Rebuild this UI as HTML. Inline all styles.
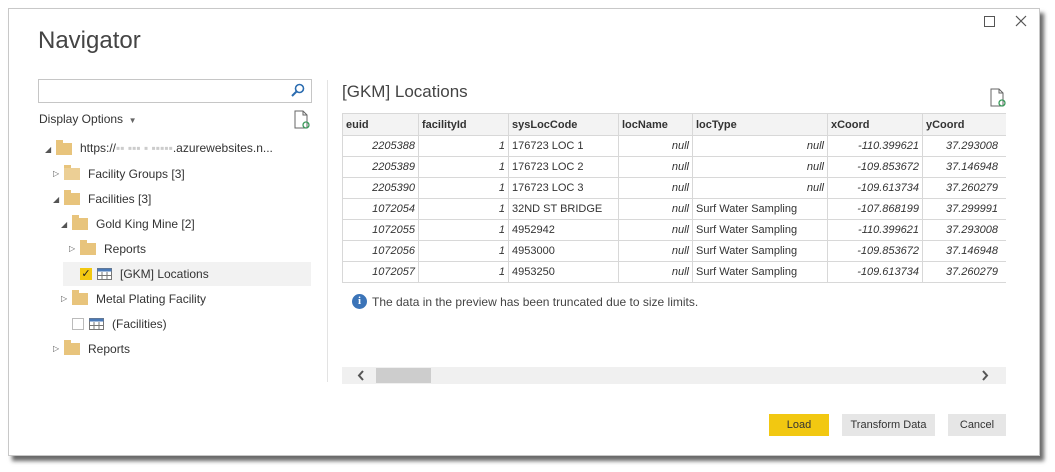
<!DOCTYPE html>
<html><head><style>
body{margin:0;width:1055px;height:472px;background:#fff;font-family:"Segoe UI","Liberation Sans",sans-serif;position:relative;overflow:hidden;color:#333}
.a{position:absolute}
.dlg{left:8px;top:8px;width:1030px;height:446px;border:1px solid #c8c8c8;background:#fff;box-shadow:4px 5px 4px #6a6a6a}
.t{font-size:12px;white-space:nowrap}
.fold{position:absolute;width:16px;height:12px;background:#e8c47c}
.fold:before{content:"";position:absolute;left:0;top:-3px;width:7px;height:3px;background:#e8c47c}
.tri{position:absolute;font-size:8px;color:#555}
table{border-collapse:collapse;font-size:11px;table-layout:fixed}
td{border:1px solid #d8d8d8;height:20px;padding:0 3px;white-space:nowrap;overflow:hidden}
th{border:1px solid #d8d8d8;background:#f3f3f3;height:21px;text-align:left;padding:0 3px;font-weight:bold;color:#333}
.n{text-align:right;font-style:italic}
.btn{position:absolute;top:414px;height:22px;font-size:11px;text-align:center;line-height:22px;background:#e6e6e6;color:#333}
</style></head><body>
<div class="a dlg"></div>
<div class="a" style="left:38px;top:27px;font-size:24px;color:#444;font-weight:300">Navigator</div>
<div class="a" style="left:984px;top:16px;width:9px;height:9px;border:1px solid #555"></div>
<svg class="a" style="left:1015px;top:15px" width="12" height="12"><path d="M1 1L11 11M11 1L1 11" stroke="#555" stroke-width="1.2"/></svg>
<div class="a" style="left:38px;top:79px;width:272px;height:22px;border:1px solid #c6c6c6"></div>
<svg class="a" style="left:290px;top:82px" width="16" height="16"><circle cx="9.5" cy="6.5" r="4" fill="none" stroke="#2b6cb0" stroke-width="1.6"/><line x1="6.5" y1="9.5" x2="2" y2="14" stroke="#2b6cb0" stroke-width="2"/></svg>
<div class="a t" style="left:39px;top:112px">Display Options <span style="font-size:8px;color:#666">&nbsp;▼</span></div>
<svg class="a" style="left:294px;top:110px" width="16" height="20"><path d="M1 1h8l4 4v13H1z" fill="#fff" stroke="#666"/><path d="M9 1v4h4" fill="none" stroke="#666"/><circle cx="12" cy="15" r="3" fill="none" stroke="#3a9a5a" stroke-width="1.3"/></svg>
<div class="a" style="left:327px;top:80px;width:1px;height:302px;background:#e3e3e3"></div>
<!-- tree -->
<div class="tri" style="left:45px;top:145px">◢</div><div class="fold" style="left:56px;top:143px"></div><div class="a t" style="left:80px;top:141px">https://<span style="color:#ccc">▪▪ ▪▪▪ ▪ ▪▪▪▪▪</span>.azurewebsites.n...</div>
<div class="tri" style="left:53px;top:169px">▷</div><div class="fold" style="left:64px;top:168px;background:#eccf95"></div><div class="a t" style="left:88px;top:167px">Facility Groups [3]</div>
<div class="tri" style="left:53px;top:195px">◢</div><div class="fold" style="left:64px;top:193px"></div><div class="a t" style="left:88px;top:192px">Facilities [3]</div>
<div class="tri" style="left:61px;top:220px">◢</div><div class="fold" style="left:72px;top:218px"></div><div class="a t" style="left:96px;top:217px">Gold King Mine [2]</div>
<div class="tri" style="left:69px;top:244px">▷</div><div class="fold" style="left:80px;top:243px"></div><div class="a t" style="left:104px;top:242px">Reports</div>
<div class="a" style="left:63px;top:262px;width:248px;height:24px;background:#f2f2f2"></div>
<div class="a" style="left:80px;top:268px;width:12px;height:12px;background:#f2c811;font-size:11px;line-height:12px;text-align:center;color:#222">✓</div>
<svg class="a" style="left:97px;top:268px" width="15" height="12"><rect x=".5" y=".5" width="14" height="11" fill="#fff" stroke="#777"/><rect x=".5" y=".5" width="14" height="3" fill="#4a7ab8"/><path d="M5 4v8M10 4v8M0 7.5h15" stroke="#777"/></svg>
<div class="a t" style="left:120px;top:267px">[GKM] Locations</div>
<div class="tri" style="left:61px;top:294px">▷</div><div class="fold" style="left:72px;top:293px"></div><div class="a t" style="left:96px;top:292px">Metal Plating Facility</div>
<div class="a" style="left:72px;top:318px;width:10px;height:10px;border:1px solid #bbb"></div>
<svg class="a" style="left:89px;top:318px" width="15" height="12"><rect x=".5" y=".5" width="14" height="11" fill="#fff" stroke="#777"/><rect x=".5" y=".5" width="14" height="3" fill="#4a7ab8"/><path d="M5 4v8M10 4v8M0 7.5h15" stroke="#777"/></svg>
<div class="a t" style="left:112px;top:317px">(Facilities)</div>
<div class="tri" style="left:53px;top:344px">▷</div><div class="fold" style="left:64px;top:343px"></div><div class="a t" style="left:88px;top:342px">Reports</div>
<!-- right -->
<div class="a" style="left:342px;top:82px;font-size:17px;color:#444;font-weight:300">[GKM] Locations</div>
<svg class="a" style="left:990px;top:88px" width="16" height="20"><path d="M1 1h8l4 4v13H1z" fill="#fff" stroke="#666"/><path d="M9 1v4h4" fill="none" stroke="#666"/><circle cx="12" cy="15" r="3" fill="none" stroke="#3a9a5a" stroke-width="1.3"/></svg>
<div class="a" style="left:342px;top:113px;width:664px;overflow:hidden">
<table style="width:700px">
<colgroup><col style="width:76px"><col style="width:90px"><col style="width:110px"><col style="width:74px"><col style="width:135px"><col style="width:95px"><col style="width:120px"></colgroup>
<tr><th>euid</th><th>facilityId</th><th>sysLocCode</th><th>locName</th><th>locType</th><th>xCoord</th><th>yCoord</th></tr>
<tr><td class="n">2205388</td><td class="n">1</td><td>176723 LOC 1</td><td class="n">null</td><td class="n">null</td><td class="n">-110.399621</td><td class="n" style="text-align:left;padding-left:23px">37.293008</td></tr>
<tr><td class="n">2205389</td><td class="n">1</td><td>176723 LOC 2</td><td class="n">null</td><td class="n">null</td><td class="n">-109.853672</td><td class="n" style="text-align:left;padding-left:23px">37.146948</td></tr>
<tr><td class="n">2205390</td><td class="n">1</td><td>176723 LOC 3</td><td class="n">null</td><td class="n">null</td><td class="n">-109.613734</td><td class="n" style="text-align:left;padding-left:23px">37.260279</td></tr>
<tr><td class="n">1072054</td><td class="n">1</td><td>32ND ST BRIDGE</td><td class="n">null</td><td>Surf Water Sampling</td><td class="n">-107.868199</td><td class="n" style="text-align:left;padding-left:23px">37.299991</td></tr>
<tr><td class="n">1072055</td><td class="n">1</td><td>4952942</td><td class="n">null</td><td>Surf Water Sampling</td><td class="n">-110.399621</td><td class="n" style="text-align:left;padding-left:23px">37.293008</td></tr>
<tr><td class="n">1072056</td><td class="n">1</td><td>4953000</td><td class="n">null</td><td>Surf Water Sampling</td><td class="n">-109.853672</td><td class="n" style="text-align:left;padding-left:23px">37.146948</td></tr>
<tr><td class="n">1072057</td><td class="n">1</td><td>4953250</td><td class="n">null</td><td>Surf Water Sampling</td><td class="n">-109.613734</td><td class="n" style="text-align:left;padding-left:23px">37.260279</td></tr>
</table></div>
<div class="a" style="left:352px;top:294px;width:15px;height:15px;border-radius:50%;background:#3b74b8;color:#fff;font-size:11px;font-weight:bold;text-align:center;line-height:15px;font-family:'Liberation Serif',serif">i</div>
<div class="a t" style="left:372px;top:295px;color:#444">The data in the preview has been truncated due to size limits.</div>
<div class="a" style="left:342px;top:367px;width:664px;height:17px;background:#f0f0f0"></div>
<div class="a" style="left:376px;top:368px;width:55px;height:15px;background:#cdcdcd"></div>
<svg class="a" style="left:356px;top:369px" width="10" height="13"><path d="M7 2L3 6.5L7 11" fill="none" stroke="#555" stroke-width="2"/></svg>
<svg class="a" style="left:980px;top:369px" width="10" height="13"><path d="M3 2L7 6.5L3 11" fill="none" stroke="#555" stroke-width="2"/></svg>
<div class="btn" style="left:769px;width:60px;background:#f2c811">Load</div>
<div class="btn" style="left:842px;width:93px">Transform Data</div>
<div class="btn" style="left:948px;width:58px">Cancel</div>
</body></html>
